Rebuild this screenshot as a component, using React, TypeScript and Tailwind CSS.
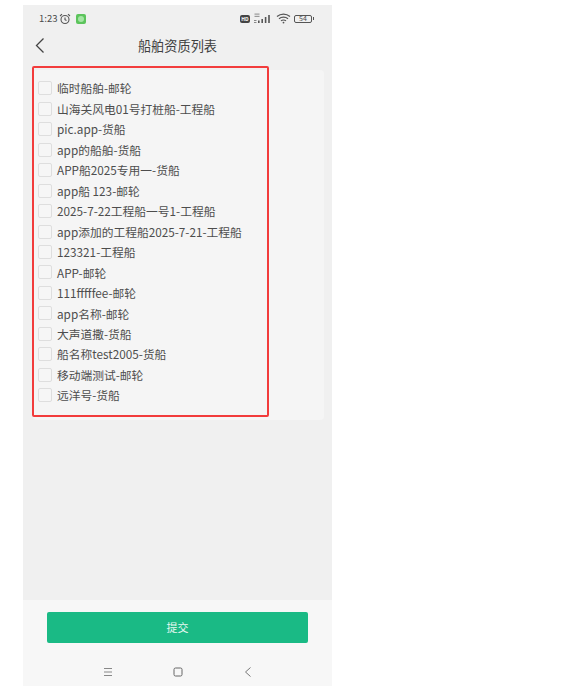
const ships = [
  "临时船舶-邮轮",
  "山海关风电01号打桩船-工程船",
  "pic.app-货船",
  "app的船舶-货船",
  "APP船2025专用一-货船",
  "app船 123-邮轮",
  "2025-7-22工程船一号1-工程船",
  "app添加的工程船2025-7-21-工程船",
  "123321-工程船",
  "APP-邮轮",
  "111fffffee-邮轮",
  "app名称-邮轮",
  "大声道撒-货船",
  "船名称test2005-货船",
  "移动端测试-邮轮",
  "远洋号-货船",
];

function StatusBar() {
  return (
    <div className="flex h-[27px] items-center justify-between pl-[16px] pr-[18px] text-[#4a4a4a]">
      <div className="flex items-center gap-[2px]">
        <span className="text-[9.5px] leading-none">1:23</span>
        <svg width="12" height="12" viewBox="0 0 12 12" fill="none" stroke="#555" strokeWidth="1.1">
          <circle cx="6" cy="6.5" r="4" />
          <path d="M6 4.5V6.7L7.5 7.5M1 3L3 1.2M11 3L9 1.2" />
        </svg>
        <span className="ml-[3px] flex h-[10px] w-[10px] items-center justify-center rounded-[2px] bg-[#5cc45c]">
          <span className="h-[6px] w-[6px] rounded-full bg-[#a5e5a5]" />
        </span>
      </div>
      <div className="flex items-center">
        <span className="flex h-[8px] w-[10px] items-center justify-center rounded-[2px] bg-[#444] text-[5px] font-bold leading-none text-white">
          HD
        </span>
        <svg width="18" height="11" viewBox="0 0 18 11" fill="#555" className="ml-[4px]">
          <rect x="0.5" y="0.5" width="5" height="1.2" fill="#999" />
          <rect x="0.5" y="2.8" width="5" height="1.2" fill="#999" />
          <rect x="0" y="7" width="2.5" height="1" fill="#888" />
          <rect x="0" y="9" width="2.5" height="1" fill="#888" />
          <rect x="4" y="7.5" width="1.6" height="2.5" />
          <rect x="7.4" y="6" width="1.6" height="4" />
          <rect x="10.8" y="4" width="1.6" height="6" />
          <rect x="14.2" y="2" width="1.6" height="8" />
        </svg>
        <svg width="15" height="11" viewBox="0 0 15 11" fill="none" stroke="#555" strokeWidth="1.2" className="ml-[4px]">
          <path d="M1 3.5C4.8 0.3 10.2 0.3 14 3.5M3 5.7C5.5 3.6 9.5 3.6 12 5.7M5 7.9C6.3 6.8 8.7 6.8 10 7.9" />
          <circle cx="7.5" cy="9.6" r="0.9" fill="#555" stroke="none" />
        </svg>
        <span className="ml-[3px] flex items-center">
          <span className="flex h-[8px] w-[18px] items-center justify-center rounded-[2px] border border-[#555] text-[7px] leading-none">
            54
          </span>
          <span className="ml-[1px] h-[3px] w-[1px] bg-[#555]" />
        </span>
      </div>
    </div>
  );
}

function Header() {
  return (
    <div className="relative flex h-[27px] items-center justify-center">
      <svg
        className="absolute left-[11px] top-[5px]"
        width="12"
        height="17"
        viewBox="0 0 12 17"
        fill="none"
        stroke="#444"
        strokeWidth="1.3"
      >
        <path d="M9.5 1.5L2.5 8.5L9.5 15.5" />
      </svg>
      <span className="text-[13.2px] leading-none text-[#3f3f3f]">船舶资质列表</span>
    </div>
  );
}

function ShipRow({ name }: { name: string }) {
  return (
    <div className="flex h-[20.47px] items-center">
      <span className="h-[14px] w-[14px] shrink-0 rounded-[2px] border border-[#dedede] bg-[#f6f6f6]" />
      <span className="ml-[5px] whitespace-nowrap text-[11.75px] leading-none text-[#4d4d4d]">{name}</span>
    </div>
  );
}

export default function App() {
  return (
    <div className="min-h-[686px] bg-white font-['Noto_Sans_CJK_SC','Liberation_Sans',sans-serif]">
      <div className="ml-[23px] flex h-[686px] w-[309px] flex-col pt-[5px]">
        <div className="flex grow flex-col bg-[#f0f0f0]">
          <StatusBar />
          <Header />
          <div className="relative ml-[10px] mt-[11px] h-[350px] w-[291px] rounded-[4px] bg-[#f5f5f5] pl-[5px] pt-[8px]">
            {ships.map((s) => (
              <ShipRow key={s} name={s} />
            ))}
            <div className="absolute -left-[1px] -top-[4px] h-[351px] w-[237px] rounded-[2px] border-2 border-[#f23c3c]" />
          </div>
        </div>
        <div className="flex h-[86px] shrink-0 flex-col items-center bg-[#f7f7f7] pt-[12px]">
          <button className="h-[31px] w-[261px] rounded-[2px] bg-[#1aba85] text-[11px] leading-none text-[#e8f8f2]">提交</button>
          <div className="mt-[24px] flex items-center gap-[60px]">
            <svg width="10" height="10" viewBox="0 0 10 10" stroke="#888" strokeWidth="1">
              <path d="M1 1.5H9M1 5H9M1 8.5H9" />
            </svg>
            <svg width="10" height="10" viewBox="0 0 10 10" fill="none" stroke="#666" strokeWidth="1">
              <rect x="1" y="1" width="8" height="8" rx="1.5" />
            </svg>
            <svg width="10" height="10" viewBox="0 0 10 10" fill="none" stroke="#777" strokeWidth="1">
              <path d="M7.5 0.5L2.5 5L7.5 9.5" />
            </svg>
          </div>
        </div>
      </div>
    </div>
  );
}
